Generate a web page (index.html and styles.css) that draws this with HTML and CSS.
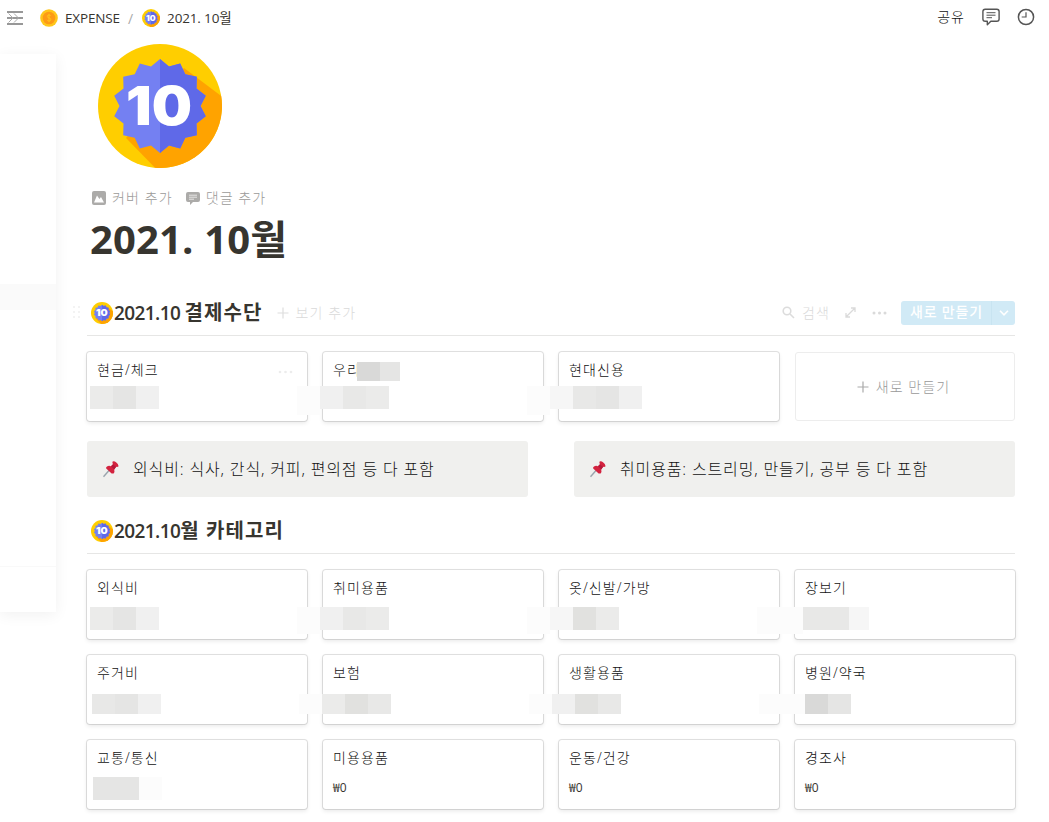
FILE: index.html
```html
<!DOCTYPE html>
<html lang="ko">
<head>
<meta charset="utf-8">
<title>2021. 10월</title>
<link rel="stylesheet" href="styles.css">
</head>
<body>
<!-- 공용 아이콘 -->
<svg class="defs" width="0" height="0">
    <symbol id="badge" viewBox="-62 -62 124 124">
        <circle r="62" fill="#ffce00"/>
        <path d="M24-38L61.2-10A62 62 0 0 1-5 61.8L-34 32Z" fill="#ffa300"/>
        <path d="M0-47L9-39.5 20.2-42.5 25.3-31.7 36.8-29.3 36.5-17.6 45.8-10.3 40.5 0 45.8 10.3 36.5 17.6 36.8 29.3 25.3 31.7 20.2 42.5 9 39.5 0 47-9 39.5-20.2 42.5-25.3 31.7-36.8 29.3-36.5 17.6-45.8 10.3-40.5 0-45.8-10.3-36.5-17.6-36.8-29.3-25.3-31.7-20.2-42.5-9-39.5Z" fill="#7480f2"/>
        <path d="M0-47L9-39.5 20.2-42.5 25.3-31.7 36.8-29.3 36.5-17.6 45.8-10.3 40.5 0 45.8 10.3 36.5 17.6 36.8 29.3 25.3 31.7 20.2 42.5 9 39.5 0 47Z" fill="#5f69e8"/>
    </symbol>
    <symbol id="pin" viewBox="0 0 18 18">
        <path d="M1.5 16.8L7 10.5" stroke="#9aa5ad" stroke-width="1.4"/>
        <path d="M10.6 1.6Q12 .6 14 2.2 17 4.4 16.6 6.2 15.6 7.2 14.2 6.8L12.2 9.4Q13 12 11.6 13.4L9.6 13.6 4.2 8.6Q3.6 7.4 5 6.4 6.8 5.4 9 6.2L11 4.2Q10 2.8 10.6 1.6Z" fill="#d3233f"/>
        <path d="M11 4.2L14 6.9 12.2 9.4 9 6.2Z" fill="#b5183a"/>
    </symbol>
</svg>

<div class="drawer"><div class="drawer-hover"></div><div class="drawer-foot"></div></div>

<div class="topbar">
    <svg class="menu" width="16" height="14" viewBox="0 0 16 14" fill="none" stroke="#777" stroke-width="1.5">
        <path d="M0 1H16M0 7H16M0 13H16"/>
        <path d="M1.5 2.5L6 7 1.5 11.5M7 2.5L11.5 7 7 11.5" stroke="#aaa" stroke-width="1"/>
    </svg>
    <svg class="coin" width="18" height="18" viewBox="0 0 18 18">
        <circle cx="9" cy="9" r="8.8" fill="#ffc61a"/>
        <circle cx="9" cy="9" r="6.3" fill="#fd9a16"/>
        <path d="M10.8 7Q10.4 6 9 6 7.3 6 7.3 7.4 7.3 8.6 9 8.9 10.8 9.2 10.8 10.6 10.8 12 9 12 7.5 12 7.1 10.9M9 4.8V13.2" fill="none" stroke="#ffc21c" stroke-width="1"/>
    </svg>
    <span class="crumb">EXPENSE</span>
    <span class="slash">/</span>
    <svg class="mini" width="18" height="18" viewBox="0 0 124 124"><use href="#badge" width="124" height="124"/><text class="badge-num" x="28" y="81" textLength="66" lengthAdjust="spacingAndGlyphs">10</text></svg>
    <span class="crumb date">2021. 10월</span>
    <div class="tools">
        <span class="share">공유</span>
        <svg width="18" height="18" viewBox="0 0 18 18" fill="none" stroke="#555" stroke-width="1.4" stroke-linejoin="round">
            <path d="M3.2 1.2H14.8Q17.1 1.2 17.1 3.4V11Q17.1 13.2 14.8 13.2H8.8L5.3 16.7V13.2H3.2Q.9 13.2 .9 11V3.4Q.9 1.2 3.2 1.2Z"/>
            <path d="M4.5 4.7H13.5M4.5 7.2H13.5M4.5 9.7H10" stroke-width="1"/>
        </svg>
        <svg class="clock" width="18" height="18" viewBox="0 0 18 18" fill="none" stroke="#555" stroke-width="1.5">
            <circle cx="9" cy="9" r="7.6"/>
            <path d="M9 4.3V9H4.7" stroke-width="1.2"/>
        </svg>
    </div>
</div>

<div class="page">
    <svg class="page-icon" width="124" height="124" viewBox="0 0 124 124"><use href="#badge" width="124" height="124"/><text class="badge-num" x="28" y="81" textLength="66" lengthAdjust="spacingAndGlyphs">10</text></svg>
    <div class="actions">
        <svg width="14" height="14" viewBox="0 0 14 14"><rect width="14" height="14" rx="2" fill="#acaba9"/><path d="M2 11.5L5 4.5 7.4 8 9 6 12 11.5Z" fill="#fff"/></svg>
        <span>커버 추가</span>
        <svg class="say" width="14" height="14" viewBox="0 0 14 14"><path d="M2 1H12Q14 1 14 3V9Q14 11 12 11H7L4 14V11H2Q0 11 0 9V3Q0 1 2 1Z" fill="#acaba9"/><path d="M3 4.2H11M3 6.2H11M3 8.2H8" stroke="#fff" stroke-width=".7"/></svg>
        <span>댓글 추가</span>
    </div>
    <h1>2021. 10월</h1>

    <!-- 결제수단 -->
    <div class="db-head">
        <svg class="handle" width="10" height="14" viewBox="0 0 10 14" fill="#f3f3f3"><path d="M0 1h2v2H0zM5 1h2v2H5zM0 6h2v2H0zM5 6h2v2H5zM0 11h2v2H0zM5 11h2v2H5z"/></svg>
        <svg width="22" height="22" viewBox="0 0 124 124"><use href="#badge" width="124" height="124"/><text class="badge-num" x="28" y="81" textLength="66" lengthAdjust="spacingAndGlyphs">10</text></svg>
        <h2>2021.10 <span>결제수단</span></h2>
        <svg class="plus" width="12" height="12" viewBox="0 0 12 12" stroke="#dedede" stroke-width="1.2"><path d="M6 .5V11.5M.5 6H11.5"/></svg>
        <span class="faint">보기 추가</span>
        <div class="db-tools">
            <svg width="13" height="13" viewBox="0 0 13 13" fill="none" stroke="#dcdcdc" stroke-width="1.6"><circle cx="5" cy="5" r="3.8"/><path d="M8 8L12 12"/></svg>
            <span class="faint">검색</span>
            <svg class="expand" width="11" height="11" viewBox="0 0 11 11" fill="none" stroke="#dadada" stroke-width="1.3"><path d="M1 10L10 1M6 1H10V5M1 6V10H5"/></svg>
            <svg class="dots" width="15" height="4" viewBox="0 0 15 4" fill="#dadada"><circle cx="2" cy="2" r="1.5"/><circle cx="7.5" cy="2" r="1.5"/><circle cx="13" cy="2" r="1.5"/></svg>
            <div class="btn-new"><span>새로 만들기</span>
                <i><svg width="10" height="6" viewBox="0 0 10 6" fill="none" stroke="#fff" stroke-width="1.6"><path d="M1 .8L5 4.8 9 .8"/></svg></i>
            </div>
        </div>
    </div>

    <div class="cards">
        <div class="card"><p>현금/체크</p>
            <svg class="card-dots" width="15" height="4" viewBox="0 0 15 4" fill="#ececec"><circle cx="2" cy="2" r="1.3"/><circle cx="7.5" cy="2" r="1.3"/><circle cx="13" cy="2" r="1.3"/></svg>
            <div class="mosaic"><b class="t3"></b><b class="t5"></b><b class="t2"></b></div>
        </div>
        <div class="card"><p>우리</p>
            <div class="mosaic name"><b class="t7"></b><b class="t5"></b></div>
            <div class="mosaic back1"><b class="t0 tall"></b><b class="t2"></b><b class="t4"></b><b class="t3"></b></div>
        </div>
        <div class="card"><p>현대신용</p>
            <div class="mosaic back2"><b class="t0 tall"></b><b class="t1"></b><b class="t4"></b><b class="t5"></b><b class="t2"></b></div>
        </div>
        <div class="card-new">
            <svg width="12" height="12" viewBox="0 0 12 12" stroke="#aaa" stroke-width="1.2"><path d="M6 .5V11.5M.5 6H11.5"/></svg>
            <span>새로 만들기</span>
        </div>
    </div>

    <div class="callouts">
        <div class="callout"><svg width="18" height="18"><use href="#pin"/></svg><span>외식비: 식사, 간식, 커피, 편의점 등 다 포함</span></div>
        <div class="callout"><svg width="18" height="18"><use href="#pin"/></svg><span>취미용품: 스트리밍, 만들기, 공부 등 다 포함</span></div>
    </div>

    <!-- 카테고리 -->
    <div class="db-head">
        <svg width="22" height="22" viewBox="0 0 124 124"><use href="#badge" width="124" height="124"/><text class="badge-num" x="28" y="81" textLength="66" lengthAdjust="spacingAndGlyphs">10</text></svg>
        <h2>2021.10<span>월 카테고리</span></h2>
    </div>

    <div class="cards">
        <div class="card"><p>외식비</p>
            <div class="mosaic up"><b class="t3"></b><b class="t5"></b><b class="t2"></b></div>
        </div>
        <div class="card"><p>취미용품</p>
            <div class="mosaic up back1"><b class="t0 tall"></b><b class="t2"></b><b class="t4"></b><b class="t3"></b></div>
        </div>
        <div class="card"><p>옷/신발/가방</p>
            <div class="mosaic up back2"><b class="t0 tall"></b><b class="t1"></b><b class="t6"></b><b class="t3"></b></div>
        </div>
        <div class="card"><p>장보기</p>
            <div class="mosaic up back3"><b class="t0 tall"></b><b class="t0 tall"></b><b class="t4"></b><b class="t4"></b><b class="t1 short"></b></div>
        </div>

        <div class="card"><p>주거비</p>
            <div class="mosaic thin"><b class="t4"></b><b class="t5"></b><b class="t2"></b></div>
        </div>
        <div class="card"><p>보험</p>
            <div class="mosaic thin back1"><b class="t0"></b><b class="t3"></b><b class="t6"></b><b class="t4"></b></div>
        </div>
        <div class="card"><p>생활용품</p>
            <div class="mosaic thin back2"><b class="t0"></b><b class="t2"></b><b class="t6"></b><b class="t4"></b></div>
        </div>
        <div class="card"><p>병원/약국</p>
            <div class="mosaic thin back3"><b class="t0"></b><b class="t0"></b><b class="t7"></b><b class="t5"></b></div>
        </div>

        <div class="card"><p>교통/통신</p>
            <div class="mosaic last"><b class="t5"></b><b class="t5"></b><b class="t0"></b></div>
        </div>
        <div class="card"><p>미용용품</p><em>₩0</em></div>
        <div class="card"><p>운동/건강</p><em>₩0</em></div>
        <div class="card"><p>경조사</p><em>₩0</em></div>
    </div>
</div>
</body>
</html>
```

FILE: styles.css
```css
*{
    box-sizing: border-box;
}
body,h1,h2,p{
    margin: 0;
}
body{
    height: 822px;
    overflow: hidden;
    position: relative;
    background: #fff;
    color: #37352f;
    font-family: "Open Sans","Noto Sans CJK KR",sans-serif;
    font-size: 14px;
    white-space: nowrap;
}
svg{
    display: block;
    flex: none;
}
.defs{
    position: absolute;
}
.badge-num{
    font-family: Inter,sans-serif;
    font-size: 53px;
    font-weight: 900;
    fill: #fff;
}

/* 왼쪽에 숨은 사이드바 */
.drawer{
    position: absolute;
    top: 54px;
    left: 0;
    width: 56px;
    height: 558px;
    box-shadow: 0 3px 14px rgba(15,15,15,.06);
}
.drawer-hover{
    height: 26px;
    margin-top: 230px;
    background: #fafafa;
}
.drawer-foot{
    height: 257px;
    border-bottom: 1px solid #f9f9f9;
}

/* 상단바 */
.topbar{
    display: flex;
    align-items: center;
    height: 36px;
    padding: 0 14px 0 7px;
}
.coin{
    margin-left: 17px;
}
.crumb{
    margin-left: 7px;
    font-size: 13.5px;
    letter-spacing: -.15px;
}
.date{
    margin-top: -2px;
}
.slash{
    margin-left: 8px;
    color: #aaa;
}
.mini{
    margin-left: 9px;
}
.tools{
    display: flex;
    align-items: center;
    margin: -2px 0 0 auto;
}
.share{
    margin: -2px 17px 0 0;
    font-weight: 300;
    color: #111;
    letter-spacing: 1px;
}
.clock{
    margin-left: 17px;
}

/* 본문 */
.page{
    padding: 8px 34px 0 87px;
}
.page-icon{
    margin-left: 11px;
}
.actions{
    display: flex;
    align-items: center;
    height: 20px;
    margin-top: 20px;
    padding-left: 5px;
    color: #9b9a98;
    font-weight: 300;
    letter-spacing: 1.1px;
}
.actions span{
    margin: -2px 0 0 6px;
}
.actions .say{
    margin-left: 13px;
}
h1{
    height: 60px;
    margin: 1px 0 0 3px;
    line-height: 60px;
    font-size: 40px;
    font-weight: 700;
    letter-spacing: .15px;
}
.db-head{
    display: flex;
    align-items: center;
    position: relative;
    height: 46px;
    margin-top: 21px;
    padding-left: 4px;
    border-bottom: 1px solid #e6e6e5;
}
.handle{
    position: absolute;
    top: 15px;
    left: -14px;
}
h2{
    margin-left: 1px;
    font-size: 19px;
    font-weight: 600;
    line-height: 28px;
    letter-spacing: -.6px;
}
h2 span{
    font-size: 20px;
    letter-spacing: 1.1px;
}
.plus{
    margin-left: 14px;
}
.faint{
    margin: -2px 0 0 7px;
    color: #dadada;
    font-weight: 300;
    letter-spacing: 1.1px;
}
.db-tools{
    display: flex;
    align-items: center;
    margin-left: auto;
}
.expand{
    margin-left: 15px;
}
.dots{
    margin: 0 14px 0 16px;
}
.btn-new{
    display: flex;
    width: 114px;
    height: 24px;
    background: #d1eaf6;
    border-radius: 3px;
    color: #fff;
    font-weight: 500;
    line-height: 22px;
}
.btn-new span{
    width: 91px;
    padding-left: 9px;
    border-right: 1px solid #c8e4f1;
    letter-spacing: .8px;
}
.btn-new i{
    display: flex;
    flex: 1;
    align-items: center;
    justify-content: center;
}

/* 카드 */
.cards{
    display: grid;
    grid-template-columns: repeat(4,220px);
    grid-auto-rows: 69px;
    gap: 16px;
    margin-top: 16px;
}
.card{
    position: relative;
    padding: 7px 10px;
    border-radius: 3px;
    box-shadow: 0 0 0 1px rgba(15,15,15,.12), 0 2px 4px rgba(15,15,15,.1);
}
.card p{
    height: 21px;
    line-height: 21px;
    color: #111;
    font-weight: 300;
    letter-spacing: 1.1px;
}
.card em{
    display: block;
    margin-top: 12px;
    font-size: 12px;
    font-style: normal;
    line-height: 16px;
}
.card-dots{
    position: absolute;
    top: 18px;
    right: 14px;
}
.card-new{
    display: flex;
    align-items: center;
    justify-content: center;
    padding-right: 3px;
    border: 1px solid #ededed;
    border-radius: 3px;
    color: #999;
    font-weight: 300;
    letter-spacing: 1.1px;
}
.card-new span{
    margin: -2px 0 0 7px;
}

/* 금액 모자이크 */
.mosaic{
    display: flex;
    position: absolute;
    z-index: 1;
    top: 34px;
    left: 3px;
    height: 23px;
}
.mosaic b{
    width: 23px;
}
.mosaic .tall{
    height: 29px;
}
.mosaic .short{
    width: 20px;
}
.back1{
    left: -26px;
}
.back2{
    left: -32px;
}
.back3{
    left: -38px;
}
.up{
    top: 37px;
}
.up .tall{
    height: 27px;
}
.thin{
    top: 39px;
    height: 20px;
    margin-left: 2px;
}
.last{
    top: 37px;
    left: 6px;
}
.name{
    top: 10px;
    left: 34px;
    height: 19px;
}
.name b + b{
    width: 20px;
}
.t0{ background: #fcfcfc; }
.t1{ background: #f6f6f6; }
.t2{ background: #f0f0f0; }
.t3{ background: #ebebea; }
.t4{ background: #e8e8e7; }
.t5{ background: #e5e5e4; }
.t6{ background: #e1e1df; }
.t7{ background: #d9d9d8; }

/* 메모 */
.callouts{
    display: flex;
    gap: 46px;
    margin-top: 20px;
}
.callout{
    display: flex;
    flex: 1;
    align-items: center;
    height: 56px;
    padding-left: 15px;
    background: #f0f0ee;
    border-radius: 3px;
    color: #111;
    font-size: 16px;
    font-weight: 300;
    letter-spacing: .85px;
}
.callout span{
    margin: -2px 0 0 13px;
}
.callouts + .db-head{
    margin-top: 11px;
}
```
